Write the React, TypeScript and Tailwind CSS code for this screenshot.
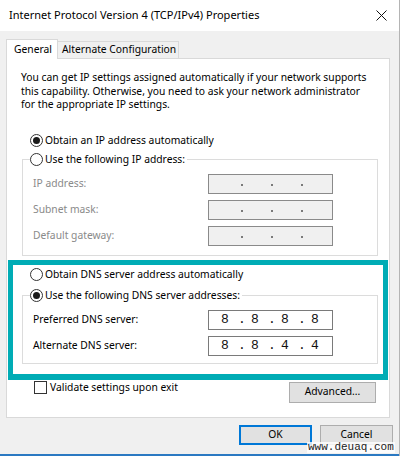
import React from "react";

const font = "font-['Segoe_UI','Noto_Sans',sans-serif]";

const Radio = ({ checked }: { checked?: boolean }) => (
  <span className="w-[13px] h-[13px] rounded-full border border-[#333] bg-white flex items-center justify-center shrink-0">
    {checked && <span className="w-[7px] h-[7px] rounded-full bg-[#1a1a1a]" />}
  </span>
);

// IP address control: four fields separated by dots
const IpBox = ({ parts, disabled }: { parts?: string[]; disabled?: boolean }) => {
  const vals = parts ?? ["", "", "", ""];
  return (
    <div
      className={`w-[125px] h-[20px] border flex items-center pl-[12px] font-['Liberation_Mono',monospace] text-[13px] ${
        disabled ? "bg-[#f0f0f0] border-[#8a8a8a] text-[#8a8a8a]" : "bg-white border-[#7a7a7a] text-[#111]"
      }`}
    >
      {vals.map((v, i) => (
        <React.Fragment key={i}>
          <span className="w-[8px] text-center leading-none">{v}</span>
          {i < 3 && (
            <span className="w-[4px] ml-[11px] mr-[7px] flex justify-center leading-none">
              {disabled ? <span className="w-[2px] h-[2px] mt-[3px] bg-[#7a7a7a]" /> : "."}
            </span>
          )}
        </React.Fragment>
      ))}
    </div>
  );
};

const Row = ({ label, disabled, parts, last }: { label: string; disabled?: boolean; parts?: string[]; last?: boolean }) => (
  <div className={`flex items-center h-[20px] ${last ? "" : "mb-[6px]"}`}>
    <span className={`w-[178px] pl-[3px] ${disabled ? "text-[#8a8a8a]" : "text-black"}`}>{label}</span>
    <IpBox parts={parts} disabled={disabled} />
  </div>
);

export default function App() {
  return (
    <div className={`relative w-[400px] h-[456px] overflow-hidden bg-[#f0f0f0] border-r border-[#b4b4b4] text-[10.3px] text-black whitespace-nowrap ${font}`}>
      {/* Title bar */}
      <div className="h-[31px] bg-white flex items-center justify-between pl-[9px] pr-[11px]">
        <span className="text-[11px]">Internet Protocol Version 4 (TCP/IPv4) Properties</span>
        <svg width="11" height="11" viewBox="0 0 11 11" className="mr-[1px]">
          <path d="M0.5 0.5 L10.5 10.5 M10.5 0.5 L0.5 10.5" stroke="#111" strokeWidth="1" />
        </svg>
      </div>

      {/* Tabs */}
      <div className="flex items-end pl-[6px] pt-[7px] h-[27px]">
        <div className="relative z-10 w-[52px] h-[20px] bg-white border border-b-0 border-[#d9d9d9] flex items-center pl-[7px] -mb-[1px]">
          General
        </div>
        <div className="w-[121px] h-[17px] bg-[#f0f0f0] border border-l-0 border-b-0 border-[#d9d9d9] flex items-center pl-[4px]">
          Alternate Configuration
        </div>
      </div>

      {/* Tab panel */}
      <div className="ml-[6px] w-[384px] h-[360px] bg-white border border-[#d9d9d9] pt-[12px]">
        <p className="pl-[14px] leading-[13.5px]">
          You can get IP settings assigned automatically if your network supports
          <br />
          this capability. Otherwise, you need to ask your network administrator
          <br />
          for the appropriate IP settings.
        </p>

        <div className="flex items-center gap-[2px] h-[16px] mt-[21px] ml-[23px]">
          <Radio checked />
          <span>Obtain an IP address automatically</span>
        </div>

        <fieldset className="ml-[15px] mt-[3px] w-[356px] border border-[#dcdcdc] pl-[7px] pb-[9px]">
          <legend className="flex items-center gap-[2px] h-[16px] pr-[2px]">
            <Radio />
            <span>Use the following IP address:</span>
          </legend>
          <div className="mt-[6px]">
            <Row label="IP address:" disabled />
            <Row label="Subnet mask:" disabled />
            <Row label="Default gateway:" disabled last />
          </div>
        </fieldset>

        <div className="flex items-center gap-[2px] h-[16px] mt-[11px] ml-[23px]">
          <Radio />
          <span>Obtain DNS server address automatically</span>
        </div>

        <fieldset className="ml-[15px] mt-[5px] w-[356px] border border-[#dcdcdc] pl-[7px] pb-[7px]">
          <legend className="flex items-center gap-[2px] h-[16px] pr-[2px]">
            <Radio checked />
            <span>Use the following DNS server addresses:</span>
          </legend>
          <div className="mt-[6px]">
            <Row label="Preferred DNS server:" parts={["8", "8", "8", "8"]} />
            <Row label="Alternate DNS server:" parts={["8", "8", "4", "4"]} last />
          </div>
        </fieldset>

        <div className="flex items-start mt-[17px]">
          <div className="flex items-center ml-[27px] gap-[3px]">
            <span className="w-[13px] h-[13px] border border-[#333] bg-white" />
            <span className="leading-[13px]">Validate settings upon exit</span>
          </div>
          <button className="ml-auto mr-[13px] mt-[1px] w-[87px] h-[21px] bg-[#e1e1e1] border border-[#adadad] flex items-center justify-center">
            Advanced...
          </button>
        </div>
      </div>

      {/* Dialog buttons */}
      <div className="flex justify-end gap-[8px] pr-[6px] mt-[7px]">
        <button className="w-[73px] h-[20px] bg-[#e1e1e1] border-2 border-[#0078d7] flex items-center justify-center">
          OK
        </button>
        <button className="w-[73px] h-[20px] bg-[#e1e1e1] border border-[#adadad] flex items-center justify-center">
          Cancel
        </button>
      </div>

      {/* bottom edge */}
      <div className="absolute left-0 right-0 bottom-0 h-[2px] bg-[#2b79c2]" />

      {/* teal highlight over the DNS section */}
      <div className="absolute left-[8px] top-[260px] w-[380px] h-[120px] border-[5px] border-b-[6px] border-[#00acb5] pointer-events-none" />

      {/* watermark */}
      <span className="absolute left-[307px] top-[442px] bg-white/80 px-[1px] font-['Liberation_Mono',monospace] text-[11px] leading-[11px] text-[#222]">
        www.deuaq.com
      </span>
    </div>
  );
}
